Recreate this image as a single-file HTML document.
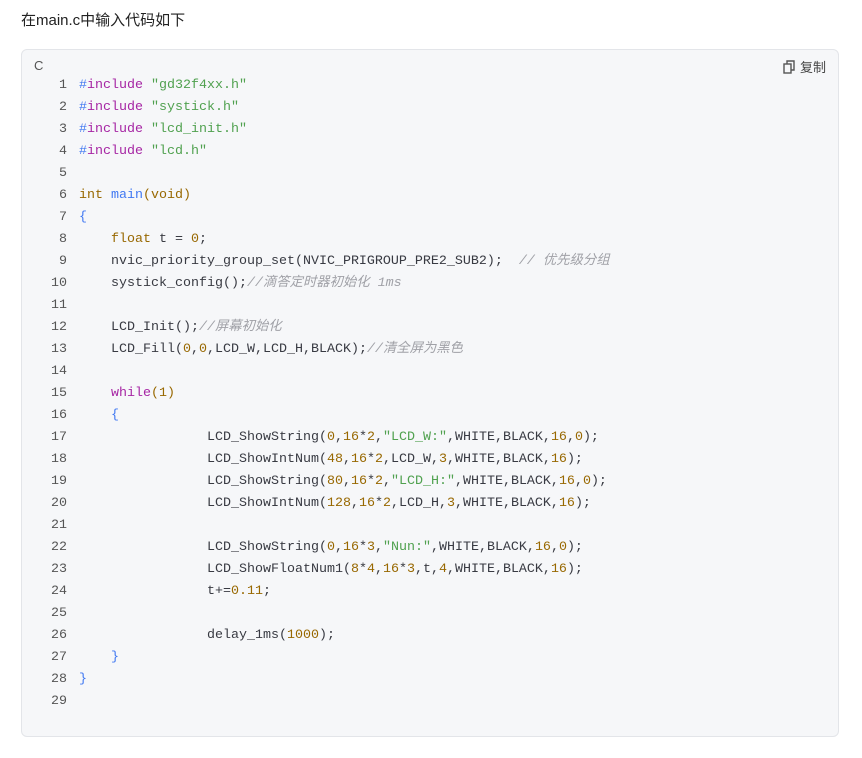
<!DOCTYPE html>
<html><head><meta charset="utf-8"><style>
body{margin:0;background:#fff;width:862px;height:758px;overflow:hidden;font-family:"Liberation Sans","Noto Sans CJK SC",sans-serif;}
.t{position:absolute;left:21px;top:9px;font-size:15px;color:#222;}
.box{position:absolute;left:21px;top:49px;width:818px;height:688px;background:#f6f7f9;border:1px solid #e3e5e9;border-radius:6px;box-sizing:border-box;}
.lang{position:absolute;left:12px;top:8px;font-size:13px;color:#555;}
.copy{position:absolute;right:12px;top:7px;font-size:13px;color:#444;display:flex;align-items:center;gap:4px;}
pre{position:absolute;left:0;top:25px;margin:0;font-family:"Liberation Mono","Noto Sans CJK SC",monospace;font-size:13.33px;line-height:22px;color:#383a42;}
.ln{display:inline-block;width:45px;text-align:right;color:#555;margin-right:12px;}
.p{color:#a626a4}.b{color:#4078f2}.s{color:#50a14f}.o{color:#986801}.c{color:#a0a1a7;font-style:italic}
</style></head><body>
<div class="t">在main.c中输入代码如下</div>
<div class="box">
<div class="lang">C</div>
<div class="copy"><svg width="13" height="14" viewBox="0 0 13 14"><rect x="1" y="4" width="7" height="9" fill="none" stroke="#555" stroke-width="1.4"/><path d="M4 4V1h7v9H8" fill="none" stroke="#555" stroke-width="1.4"/></svg>复制</div>
<pre><span class="ln">1</span><span class="b">#</span><span class="p">include</span> <span class="s">"gd32f4xx.h"</span>
<span class="ln">2</span><span class="b">#</span><span class="p">include</span> <span class="s">"systick.h"</span>
<span class="ln">3</span><span class="b">#</span><span class="p">include</span> <span class="s">"lcd_init.h"</span>
<span class="ln">4</span><span class="b">#</span><span class="p">include</span> <span class="s">"lcd.h"</span>
<span class="ln">5</span>
<span class="ln">6</span><span class="o">int</span> <span class="b">main</span><span class="o">(void)</span>
<span class="ln">7</span><span class="b">{</span>
<span class="ln">8</span>    <span class="o">float</span> t = <span class="o">0</span>;
<span class="ln">9</span>    nvic_priority_group_set(NVIC_PRIGROUP_PRE2_SUB2);  <span class="c">// 优先级分组</span>
<span class="ln">10</span>    systick_config();<span class="c">//滴答定时器初始化 1ms</span>
<span class="ln">11</span>
<span class="ln">12</span>    LCD_Init();<span class="c">//屏幕初始化</span>
<span class="ln">13</span>    LCD_Fill(<span class="o">0</span>,<span class="o">0</span>,LCD_W,LCD_H,BLACK);<span class="c">//清全屏为黑色</span>
<span class="ln">14</span>
<span class="ln">15</span>    <span class="p">while</span><span class="o">(1)</span>
<span class="ln">16</span>    <span class="b">{</span>
<span class="ln">17</span>                LCD_ShowString(<span class="o">0</span>,<span class="o">16</span>*<span class="o">2</span>,<span class="s">"LCD_W:"</span>,WHITE,BLACK,<span class="o">16</span>,<span class="o">0</span>);
<span class="ln">18</span>                LCD_ShowIntNum(<span class="o">48</span>,<span class="o">16</span>*<span class="o">2</span>,LCD_W,<span class="o">3</span>,WHITE,BLACK,<span class="o">16</span>);
<span class="ln">19</span>                LCD_ShowString(<span class="o">80</span>,<span class="o">16</span>*<span class="o">2</span>,<span class="s">"LCD_H:"</span>,WHITE,BLACK,<span class="o">16</span>,<span class="o">0</span>);
<span class="ln">20</span>                LCD_ShowIntNum(<span class="o">128</span>,<span class="o">16</span>*<span class="o">2</span>,LCD_H,<span class="o">3</span>,WHITE,BLACK,<span class="o">16</span>);
<span class="ln">21</span>
<span class="ln">22</span>                LCD_ShowString(<span class="o">0</span>,<span class="o">16</span>*<span class="o">3</span>,<span class="s">"Nun:"</span>,WHITE,BLACK,<span class="o">16</span>,<span class="o">0</span>);
<span class="ln">23</span>                LCD_ShowFloatNum1(<span class="o">8</span>*<span class="o">4</span>,<span class="o">16</span>*<span class="o">3</span>,t,<span class="o">4</span>,WHITE,BLACK,<span class="o">16</span>);
<span class="ln">24</span>                t+=<span class="o">0.11</span>;
<span class="ln">25</span>
<span class="ln">26</span>                delay_1ms(<span class="o">1000</span>);
<span class="ln">27</span>    <span class="b">}</span>
<span class="ln">28</span><span class="b">}</span>
<span class="ln">29</span></pre>
</div>
</body></html>
